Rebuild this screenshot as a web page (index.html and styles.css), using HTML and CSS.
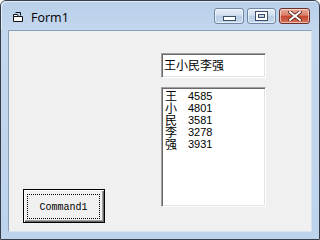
FILE: index.html
```html
<!DOCTYPE html>
<html lang="zh">
  <head>
    <meta charset="UTF-8" />
    <title>Form1</title>
    <link rel="stylesheet" href="styles.css">
  </head>
  <body>
    <div class="window">
      <div class="titlebar">
        <svg class="app-icon" width="12" height="11" viewBox="0 0 12 11">
          <path d="M1.5 2.5 L1.5 9.5 L10.5 9.5 L10.5 4.5 L6.5 4.5 L5.5 2.5 Z" fill="#fff" stroke="#111" stroke-width="1"/>
          <path d="M1.5 4.5 L6.5 4.5" stroke="#111" stroke-width="1"/>
          <path d="M3.5 0.5 L8.5 0.5 L8.5 3.5" fill="none" stroke="#111" stroke-width="1"/>
        </svg>
        <span class="title">Form1</span>
        <div class="caption-buttons">
          <div class="cap-btn"><span class="glyph-min"></span></div>
          <div class="cap-btn"><span class="glyph-max"></span></div>
          <div class="cap-btn close">
            <svg width="14" height="10" viewBox="0 0 14 10">
              <path d="M2 1 L12 9 M12 1 L2 9" stroke="#5a1f14" stroke-width="3.6" stroke-linecap="square"/>
              <path d="M2 1 L12 9 M12 1 L2 9" stroke="#fff" stroke-width="2" stroke-linecap="square"/>
            </svg>
          </div>
        </div>
      </div>
      <div class="client">
        <div class="left-col">
          <div class="command">
            <div class="focus">Command1</div>
          </div>
        </div>
        <div class="right-col">
          <div class="textbox">王小民李强</div>
          <div class="listbox">
            <div class="item"><span class="name">王</span><span class="num">4585</span></div>
            <div class="item"><span class="name">小</span><span class="num">4801</span></div>
            <div class="item"><span class="name">民</span><span class="num">3581</span></div>
            <div class="item"><span class="name">李</span><span class="num">3278</span></div>
            <div class="item"><span class="name">强</span><span class="num">3931</span></div>
          </div>
        </div>
      </div>
    </div>
  </body>
</html>
```

FILE: styles.css
```css
html,
body {
  margin: 0;
  padding: 0;
  background: #ffffff;
}

.window {
  width: 320px;
  height: 240px;
  box-sizing: border-box;
  border: 1px solid #343e4a;
  border-radius: 6px 6px 0 0;
  background: linear-gradient(to bottom, #b9d0ea 0px, #c3d7ed 30px, #bed4ec 100%);
  display: flex;
  flex-direction: column;
}

.titlebar {
  height: 29px;
  display: flex;
  align-items: center;
  padding-left: 11px;
  padding-right: 9px;
  box-shadow: inset 1px 1px 0 rgba(255, 255, 255, 0.6);
  border-radius: 5px 5px 0 0;
}

.app-icon {
  margin-top: 3px;
}

.title {
  font-family: "Open Sans", sans-serif;
  font-size: 12.5px;
  color: #000;
  margin-left: 7px;
  margin-top: 3px;
}

.caption-buttons {
  margin-left: auto;
  display: flex;
  gap: 3px;
  align-self: flex-start;
  margin-top: 7px;
}

.cap-btn {
  width: 30px;
  height: 16px;
  box-sizing: border-box;
  border: 1px solid #6f86a3;
  border-radius: 3px;
  background: linear-gradient(to bottom, #e6eef8 0%, #d2dfef 45%, #b9cde4 50%, #c6d8ec 100%);
  box-shadow: inset 0 0 0 1px rgba(255, 255, 255, 0.55);
  display: flex;
  align-items: center;
  justify-content: center;
}

.cap-btn:nth-child(2) {
  width: 29px;
}

.cap-btn.close {
  width: 31px;
  border-color: #6b2d25;
  background: linear-gradient(to bottom, #e9a898 0%, #d9806b 45%, #c4462d 50%, #d3735a 100%);
}

.glyph-min {
  width: 11px;
  height: 3px;
  margin-top: 5px;
  background: #fff;
  border: 1px solid #3c4f66;
}

.glyph-max {
  width: 7px;
  height: 4px;
  border: 2px solid #fff;
  outline: 1px solid #3c4f66;
  box-shadow: inset 0 0 0 1px #3c4f66;
}

.client {
  flex: 1;
  margin: 0 7px 7px 7px;
  background: #f0f0f0;
  border: 1px solid #8aa0b9;
  border-bottom-color: #d6e2ef;
  border-right-color: #d6e2ef;
  display: flex;
  padding: 22px 0 0 14px;
  box-sizing: border-box;
}

.left-col {
  width: 138px;
}

.command {
  margin-top: 136px;
  width: 82px;
  height: 34px;
  box-sizing: border-box;
  border: 1px solid #000;
  background: #f0f0f0;
  box-shadow: inset 1px 1px 0 #fff, inset -1px -1px 0 #696969, inset -2px -2px 0 #a0a0a0;
  padding: 4px 4px 3px 3px;
}

.focus {
  height: 100%;
  box-sizing: border-box;
  border: 1px dotted #000;
  display: flex;
  align-items: center;
  justify-content: center;
  font-family: "Liberation Mono", monospace;
  font-size: 10px;
  color: #000;
  padding-top: 1px;
}

.textbox {
  width: 105px;
  height: 25px;
  box-sizing: border-box;
  background: #fff;
  border: 1px solid;
  border-color: #a0a0a0 #fff #fff #a0a0a0;
  box-shadow: inset 1px 1px 0 #696969, inset -1px -1px 0 #e3e3e3;
  font-family: "Noto Sans CJK SC", sans-serif;
  font-size: 12px;
  line-height: 14px;
  padding: 4px 0 0 2px;
  color: #000;
}

.listbox {
  margin-top: 9px;
  width: 105px;
  height: 120px;
  box-sizing: border-box;
  background: #fff;
  border: 1px solid;
  border-color: #a0a0a0 #fff #fff #a0a0a0;
  box-shadow: inset 1px 1px 0 #696969, inset -1px -1px 0 #e3e3e3;
  padding: 2px 0 0 3px;
}

.item {
  display: flex;
  height: 12px;
  align-items: center;
}

.name {
  width: 23px;
  font-family: "Noto Sans CJK SC", sans-serif;
  font-size: 12px;
  line-height: 12px;
  color: #000;
}

.num {
  font-family: "Liberation Sans", sans-serif;
  font-size: 11px;
  line-height: 12px;
  color: #000;
}
```
